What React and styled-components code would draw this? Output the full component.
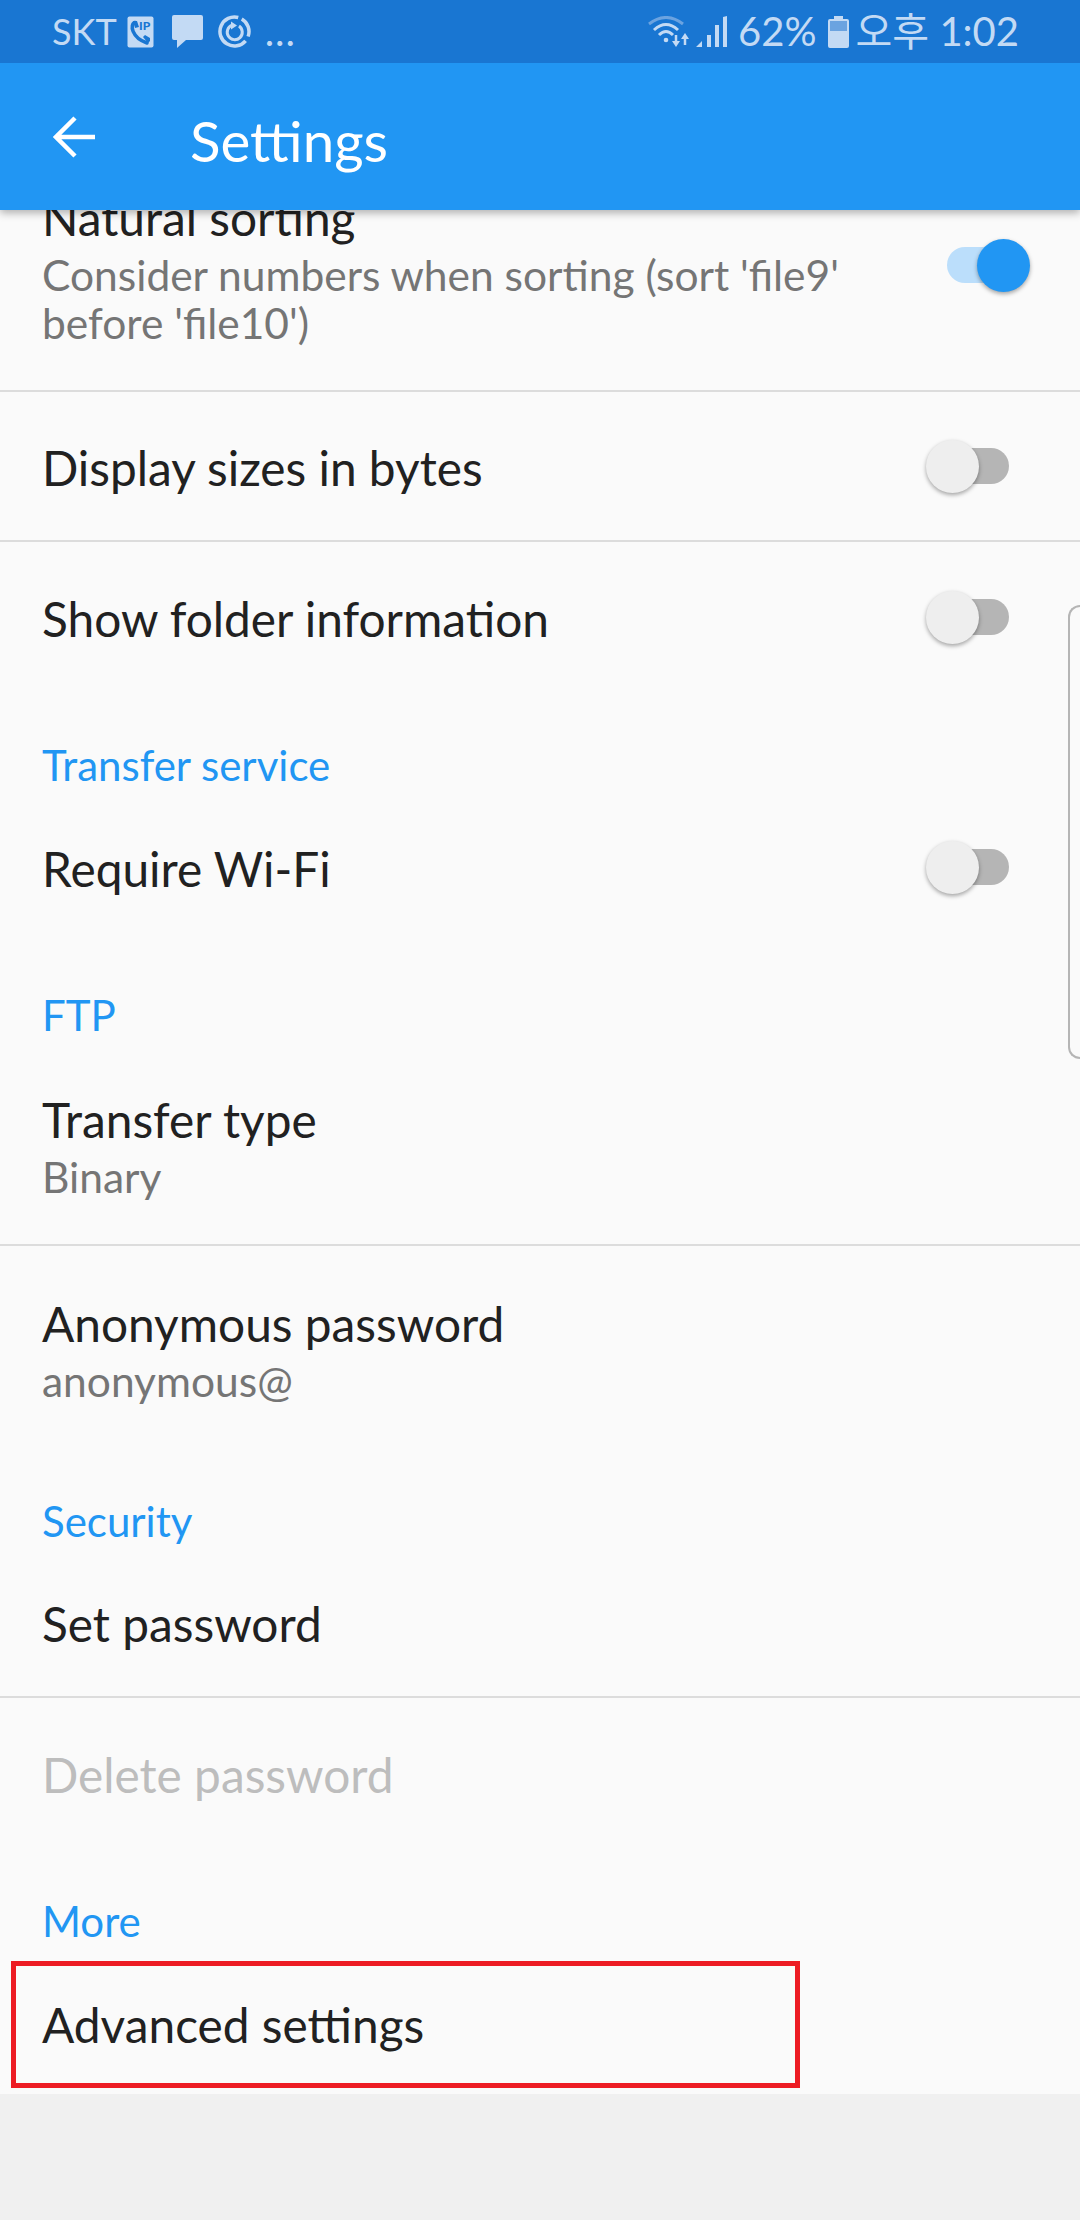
import React from 'react';
import styled, { createGlobalStyle } from 'styled-components';

const GlobalStyle = createGlobalStyle`
  html, body {
    margin: 0;
    padding: 0;
    background-color: #f0f0f0;
  }
  * {
    box-sizing: border-box;
  }
`;

const Page = styled.div`
  position: relative;
  display: flex;
  flex-direction: column;
  width: 1080px;
  height: 2220px;
  overflow: hidden;
  background-color: #f0f0f0;
  font-family: Lato, "Noto Sans CJK KR", sans-serif;
`;

const StatusBar = styled.div`
  position: relative;
  z-index: 3;
  height: 63px;
  padding: 0 61px 0 52px;
  display: flex;
  align-items: center;
  justify-content: space-between;
  background-color: #1976d2;
  color: #c3daf4;
`;

const StatusGroup = styled.div`
  display: flex;
  align-items: center;
`;

const StatusText = styled.span`
  font-size: ${(p) => p.$size || 40}px;
  line-height: 63px;
  margin: 0 0 0 ${(p) => p.$left || 0}px;
  letter-spacing: ${(p) => p.$spacing || 0}px;
  white-space: nowrap;
`;

const AppBar = styled.header`
  position: relative;
  z-index: 2;
  height: 147px;
  padding-left: 53px;
  display: flex;
  align-items: center;
  background-color: #2196f3;
  box-shadow: 0 3px 8px rgba(0, 0, 0, 0.3);
`;

const AppTitle = styled.h1`
  margin: 6px 0 0 95px;
  font-size: 56.5px;
  font-weight: 400;
  color: #ffffff;
`;

const Scroller = styled.main`
  height: 1884px;
  overflow: hidden;
  background-color: #fafafa;
`;

const List = styled.div`
  margin-top: -70px;
`;

const Row = styled.div`
  display: flex;
  align-items: center;
  justify-content: space-between;
  height: ${(p) => p.$height}px;
  padding: 0 71px 0 42px;
  border-bottom: ${(p) => (p.$divider ? '2px solid #dcdcdc' : 'none')};
`;

const RowText = styled.div`
  display: flex;
  flex-direction: column;
`;

const Title = styled.div`
  padding-top: 4px;
  font-size: 47.8px;
  line-height: 60px;
  color: ${(p) => (p.$disabled ? '#bdbdbd' : '#212121')};
`;

const Summary = styled.div`
  margin-top: 3px;
  max-width: 860px;
  font-size: 42.5px;
  line-height: 48px;
  color: #757575;
`;

const SectionHeader = styled.div`
  display: flex;
  align-items: center;
  height: 100px;
  padding: 45px 0 0 42px;
  font-size: 42px;
  color: #2196f3;
`;

const Track = styled.div`
  position: relative;
  flex: none;
  width: 62px;
  height: 36px;
  border-radius: 18px;
  background-color: ${(p) => (p.$on ? '#bbdefb' : '#b5b5b5')};
`;

const Knob = styled.div`
  position: absolute;
  top: -8px;
  left: ${(p) => (p.$on ? '30px' : '-21px')};
  width: 53px;
  height: 53px;
  border-radius: 50%;
  background-color: ${(p) => (p.$on ? '#2196f3' : '#eeeeee')};
  box-shadow: 0 2px 4px rgba(0, 0, 0, 0.35);
`;

const EdgeHandle = styled.div`
  position: absolute;
  top: 605px;
  right: 0;
  width: 12px;
  height: 454px;
  border: 2px solid #b5b5b5;
  border-right: none;
  border-radius: 12px 0 0 12px;
`;

const Highlight = styled.div`
  position: absolute;
  top: 1961px;
  left: 11px;
  width: 789px;
  height: 127px;
  border: 5px solid #ed1c24;
  pointer-events: none;
`;

const Toggle = ({ on }) => (
  <Track $on={on}>
    <Knob $on={on} />
  </Track>
);

const CallIcon = () => (
  <svg width="27" height="32" viewBox="0 0 27 32" style={{ marginLeft: 10 }}>
    <rect x="0.5" y="0.5" width="26" height="31" rx="2" fill="#c3daf4" />
    <path d="M8 6.500C2.500 8 4.500 22 20 27" fill="none" stroke="#1976d2" strokeWidth="3.500" strokeLinecap="round" />
    <path d="M6 5h4l2 6-4 1zM16 21l2-2 5 3v3l-2 2z" fill="#1976d2" />
    <text x="12" y="14" fontSize="12" fontWeight="900" fontFamily="Lato, sans-serif" fill="#1976d2">IP</text>
  </svg>
);

const MessageIcon = () => (
  <svg width="31" height="33" viewBox="0 0 31 33" style={{ marginLeft: 18 }}>
    <path d="M2 0h27a2 2 0 0 1 2 2v21a2 2 0 0 1-2 2H14l-9 8v-8H2a2 2 0 0 1-2-2V2a2 2 0 0 1 2-2z" fill="#c3daf4" />
  </svg>
);

const SyncIcon = () => (
  <svg width="33" height="33" viewBox="0 0 33 33" fill="none" stroke="#c3daf4" strokeWidth="3.500" style={{ marginLeft: 15 }}>
    <path d="M20.250 2.500A14.500 14.500 0 1 0 27.600 25.800" />
    <path d="M23.750 3.940A14.500 14.500 0 0 1 30.100 21.500" />
    <path d="M21 11A7.500 7.500 0 1 1 14 10.200" strokeWidth="3" />
    <path d="M13 6.500l6 4-6 4z" fill="#c3daf4" stroke="none" />
  </svg>
);

const WifiIcon = () => (
  <svg width="42" height="32" viewBox="0 0 42 32" fill="none">
    <path d="M1 8Q18-5 35 8" stroke="#6ba3e0" strokeWidth="3" />
    <path d="M6 14Q18 3 30 14" stroke="#c3daf4" strokeWidth="3" />
    <path d="M11 19Q18 12 25 19" stroke="#c3daf4" strokeWidth="3" />
    <circle cx="18" cy="24" r="2.300" fill="#c3daf4" />
    <path d="M28 19v7" stroke="#c3daf4" strokeWidth="2.500" />
    <path d="M24 25h8l-4 6z" fill="#c3daf4" />
    <path d="M37 29v-7" stroke="#c3daf4" strokeWidth="2.500" />
    <path d="M33 23h8l-4-6z" fill="#c3daf4" />
  </svg>
);

const SignalIcon = () => (
  <svg width="31" height="32" viewBox="0 0 31 32" style={{ marginLeft: 6 }}>
    <path d="M0 31l6-6v6zM11 19h4v12h-4zM19 9h4v22h-4zM27 1l4-1v31h-4z" fill="#c3daf4" />
  </svg>
);

const BatteryIcon = () => (
  <svg width="21" height="32" viewBox="0 0 21 32" style={{ marginLeft: 11 }}>
    <path d="M6 0h9v3h4a2 2 0 0 1 2 2v25a2 2 0 0 1-2 2H2a2 2 0 0 1-2-2V5a2 2 0 0 1 2-2h4z" fill="#c3daf4" />
    <rect x="2" y="5" width="17" height="10" fill="#6ba3e0" />
  </svg>
);

const BackArrow = () => (
  <svg width="42" height="42" viewBox="0 0 42 42" fill="none" stroke="#ffffff" strokeWidth="4.500">
    <path d="M42 21H3M22 2L3 21l19 19" />
  </svg>
);

const App = () => (
  <Page>
    <GlobalStyle />
    <StatusBar>
      <StatusGroup>
        <StatusText $size={36}>SKT</StatusText>
        <CallIcon />
        <MessageIcon />
        <SyncIcon />
        <StatusText $size={40} $left={14} $spacing={1}>...</StatusText>
      </StatusGroup>
      <StatusGroup>
        <WifiIcon />
        <SignalIcon />
        <StatusText $left={11}>62%</StatusText>
        <BatteryIcon />
        <StatusText $left={7}>오후 1:02</StatusText>
      </StatusGroup>
    </StatusBar>
    <AppBar>
      <BackArrow />
      <AppTitle>Settings</AppTitle>
    </AppBar>
    <Scroller>
      <List>
        <Row $height={252} $divider>
          <RowText>
            <Title>Natural sorting</Title>
            <Summary>Consider numbers when sorting (sort 'file9' before 'file10')</Summary>
          </RowText>
          <Toggle on />
        </Row>
        <Row $height={150} $divider>
          <Title>Display sizes in bytes</Title>
          <Toggle />
        </Row>
        <Row $height={150}>
          <Title>Show folder information</Title>
          <Toggle />
        </Row>
        <SectionHeader>Transfer service</SectionHeader>
        <Row $height={150}>
          <Title>Require Wi-Fi</Title>
          <Toggle />
        </Row>
        <SectionHeader>FTP</SectionHeader>
        <Row $height={204} $divider>
          <RowText>
            <Title>Transfer type</Title>
            <Summary>Binary</Summary>
          </RowText>
        </Row>
        <Row $height={202}>
          <RowText>
            <Title>Anonymous password</Title>
            <Summary>anonymous@</Summary>
          </RowText>
        </Row>
        <SectionHeader>Security</SectionHeader>
        <Row $height={150} $divider>
          <Title>Set password</Title>
        </Row>
        <Row $height={150}>
          <Title $disabled>Delete password</Title>
        </Row>
        <SectionHeader>More</SectionHeader>
        <Row $height={150}>
          <Title>Advanced settings</Title>
        </Row>
      </List>
    </Scroller>
    <EdgeHandle />
    <Highlight />
  </Page>
);

export default App;
